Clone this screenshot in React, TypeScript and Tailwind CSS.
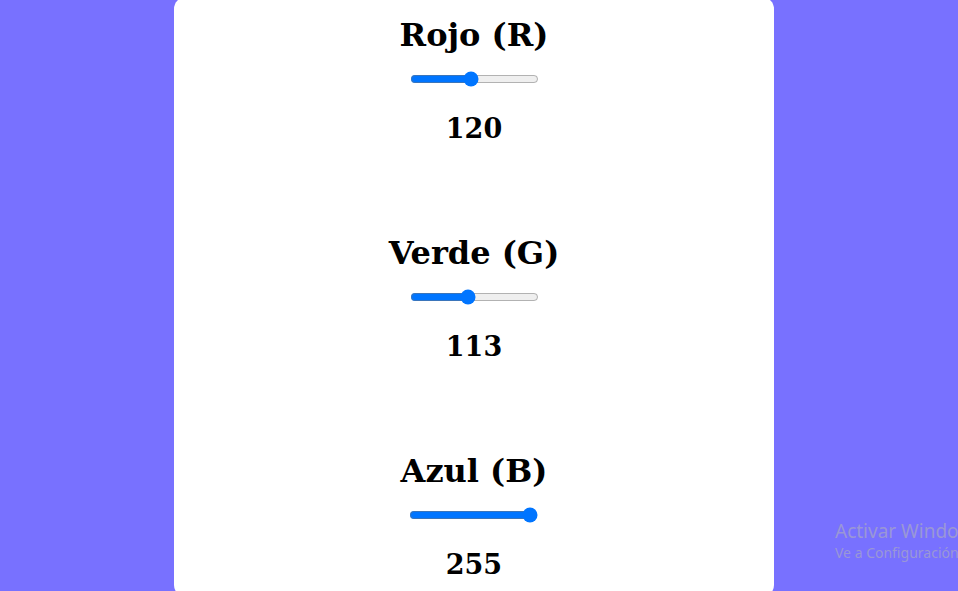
import { useState } from "react";

const channels = [
  { label: "Rojo (R)", value: 120 },
  { label: "Verde (G)", value: 113 },
  { label: "Azul (B)", value: 255 },
];

function Channel({ label, initial }: { label: string; initial: number }) {
  const [v, setV] = useState(initial);
  return (
    <div className="flex flex-col items-center">
      <h2 className="text-[32px] leading-[40px] font-bold text-black">{label}</h2>
      <input
        type="range"
        min={0}
        max={255}
        value={v}
        onChange={(e) => setV(Number(e.target.value))}
        className="mt-4 block h-4 w-[129px] m-0"
      />
      <p className="mt-[24px] text-[27px] leading-[36px] font-bold text-black">{v}</p>
    </div>
  );
}

export default function App() {
  return (
    <div className="relative h-[591px] overflow-hidden bg-[#7871ff] pr-[10px] font-['DejaVu_Serif',Georgia,serif]">
      <div className="mx-auto mt-[-3px] flex h-[600px] w-[600px] flex-col items-center gap-[86px] rounded-[12px] bg-white pt-[18px]">
        {channels.map((c) => (
          <Channel key={c.label} label={c.label} initial={c.value} />
        ))}
      </div>
      <div className="absolute left-[835px] top-[518px] whitespace-nowrap font-['Noto_Sans',sans-serif] text-[#9a97d6]">
        <p className="text-[19px] leading-[26px]">Activar Windows</p>
        <p className="text-[14px] leading-[18px]">Ve a Configuración para activar Windows.</p>
      </div>
    </div>
  );
}
